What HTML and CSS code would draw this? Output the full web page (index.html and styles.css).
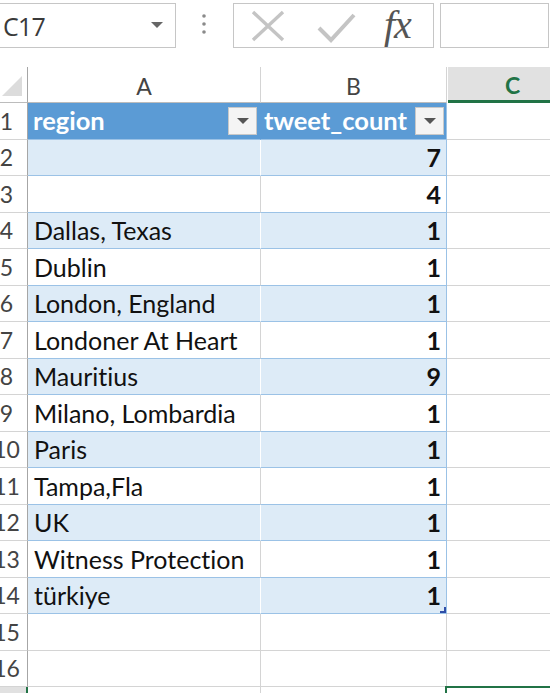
FILE: index.html
```html
<!DOCTYPE html>
<html>
<head>
<meta charset="utf-8">
<link rel="stylesheet" href="styles.css">
</head>
<body>
<div class="fbar">
  <div class="namebox">
    <span class="nb-text">C17</span>
    <svg class="nb-arrow" width="12" height="7" viewBox="0 0 12 7"><path d="M0 0H12L6 6Z" fill="#666"/></svg>
  </div>
  <svg class="dots" width="6" height="24" viewBox="0 0 6 24"><circle cx="3" cy="3" r="1.8" fill="#8a8a8a"/><circle cx="3" cy="11" r="1.8" fill="#8a8a8a"/><circle cx="3" cy="19" r="1.8" fill="#8a8a8a"/></svg>
  <div class="fbtns">
    <svg class="ico x" width="36" height="34" viewBox="0 0 36 34"><path d="M3 3L33 31M33 3L3 31" stroke="#c4c4c4" stroke-width="3.4" fill="none"/></svg>
    <svg class="ico ok" width="40" height="32" viewBox="0 0 40 32"><path d="M3 16L15 28L38 3" stroke="#c4c4c4" stroke-width="4" fill="none"/></svg>
    <span class="fx">fx</span>
  </div>
  <div class="finput"></div>
</div>

<div class="sheet">
  <div class="grid">
    <div class="rh corner"><span class="tri"></span></div>
    <div class="ch">A</div>
    <div class="ch">B</div>
    <div class="ch sel">C</div>

    <div class="rh">1</div>
    <div class="th a">region<span class="filt"><svg width="12" height="7" viewBox="0 0 12 7"><path d="M0 0H12L6 6Z" fill="#555"/></svg></span></div>
    <div class="th b">tweet_count<span class="filt"><svg width="12" height="7" viewBox="0 0 12 7"><path d="M0 0H12L6 6Z" fill="#555"/></svg></span></div>
    <div class="c"></div>

    <div class="rh">2</div><div class="td a band"></div><div class="td b band">7</div><div class="c"></div>
    <div class="rh">3</div><div class="td a"></div><div class="td b">4</div><div class="c"></div>
    <div class="rh">4</div><div class="td a band">Dallas, Texas</div><div class="td b band">1</div><div class="c"></div>
    <div class="rh">5</div><div class="td a">Dublin</div><div class="td b">1</div><div class="c"></div>
    <div class="rh">6</div><div class="td a band">London, England</div><div class="td b band">1</div><div class="c"></div>
    <div class="rh">7</div><div class="td a">Londoner At Heart</div><div class="td b">1</div><div class="c"></div>
    <div class="rh">8</div><div class="td a band">Mauritius</div><div class="td b band">9</div><div class="c"></div>
    <div class="rh">9</div><div class="td a">Milano, Lombardia</div><div class="td b">1</div><div class="c"></div>
    <div class="rh">10</div><div class="td a band">Paris</div><div class="td b band">1</div><div class="c"></div>
    <div class="rh">11</div><div class="td a">Tampa,Fla</div><div class="td b">1</div><div class="c"></div>
    <div class="rh">12</div><div class="td a band">UK</div><div class="td b band">1</div><div class="c"></div>
    <div class="rh">13</div><div class="td a">Witness Protection</div><div class="td b">1</div><div class="c"></div>
    <div class="rh">14</div><div class="td a band">türkiye</div><div class="td b band last">1<span class="handle"></span></div><div class="c"></div>
    <div class="rh">15</div><div class="g"></div><div class="g"></div><div class="c"></div>
    <div class="rh">16</div><div class="g"></div><div class="g"></div><div class="c"></div>
    <div class="rh selrow">17</div><div class="g"></div><div class="g"></div><div class="c active"></div>
  </div>
</div>
</body>
</html>
```

FILE: styles.css
```css
html, body {
  margin: 0;
  padding: 0;
  background: #fff;
}
body {
  width: 550px;
  height: 693px;
  overflow: hidden;
  font-family: Lato, "Open Sans", sans-serif;
  font-variant-ligatures: none;
}

.fbar {
  height: 67px;
  display: flex;
  align-items: flex-start;
  padding-top: 3px;
  box-sizing: border-box;
}
.namebox {
  margin-left: -2px;
  width: 178px;
  height: 45px;
  box-sizing: border-box;
  border: 1px solid #c6c6c6;
  display: flex;
  align-items: center;
  justify-content: space-between;
  padding: 0 12px 0 4px;
}
.nb-text {
  font-family: "Open Sans", sans-serif;
  font-size: 25px;
  color: #3a3a3a;
  letter-spacing: -0.8px;
}
.dots {
  margin: 10px 0 0 25px;
}
.fbtns {
  margin-left: 26px;
  width: 201px;
  height: 45px;
  box-sizing: border-box;
  border: 1px solid #c6c6c6;
  display: flex;
  align-items: center;
  padding-left: 16px;
}
.ico.ok { margin-left: 30px; margin-top: 4px; }
.fx {
  margin-left: 28px;
  font-family: "Liberation Serif", serif;
  font-style: italic;
  font-size: 40px;
  color: #555;
  line-height: 1;
  margin-top: -2px;
  letter-spacing: -1px;
}
.finput {
  margin-left: 6px;
  width: 109px;
  height: 45px;
  box-sizing: border-box;
  border: 1px solid #c6c6c6;
}

.sheet { margin-left: -21px; }
.grid {
  display: grid;
  grid-template-columns: 49px 233px 186px 130px;
  grid-template-rows: 36px;
  grid-auto-rows: 36.5px;
}
.grid > div {
  box-sizing: border-box;
  border-right: 1px solid #d4d4d4;
  border-bottom: 1px solid #d4d4d4;
  display: flex;
  align-items: flex-end;
  overflow: hidden;
  white-space: nowrap;
  position: relative;
}

.rh {
  justify-content: center;
  font-size: 23px;
  color: #444;
  padding-bottom: 4px;
  padding-left: 7px;
}
.grid > .rh { border-right: 1px solid #a6a6a6; }
.corner .tri {
  position: absolute;
  right: 5px;
  bottom: 6px;
  width: 0;
  height: 0;
  border-left: 20px solid transparent;
  border-bottom: 20px solid #dcdcdc;
}
.grid > .corner { border-bottom-color: #bcbcbc; }

.ch {
  justify-content: center;
  align-items: center !important;
  font-size: 23px;
  color: #444;
  padding-top: 3px;
}
.grid > .ch { border-bottom-color: #bcbcbc; }
.grid > .ch.sel {
  background: #e1e1e1;
  color: #217346;
  font-weight: bold;
  border-bottom: 3px solid #217346;
  border-right: none;
  margin-left: 1px;
}

.th {
  background: #5b9bd5;
  color: #fff;
  font-weight: bold;
  font-size: 25.5px;
  padding: 0 0 4px 5px;
}
.grid > .th { border-bottom-color: #9bc2e6; }
.grid > .th.a { border-right-color: #5b9bd5; }
.grid > .th.b { border-right-color: #9bc2e6; padding-left: 3px; }
.filt {
  position: absolute;
  right: 2px;
  top: 4px;
  width: 29px;
  height: 28px;
  box-sizing: border-box;
  background: #f4f4f4;
  border: 1px solid #c8c8c8;
  display: flex;
  align-items: center;
  justify-content: center;
}
.th.a .filt { right: 3px; }

.td {
  font-size: 25px;
  color: #111;
  padding: 0 0 3px 6px;
}
.grid > .td { border-bottom-color: #9bc2e6; }
.td.band { background: #ddebf7; }
.grid > .td.a.band { border-right-color: #fff; }
.td.b {
  justify-content: flex-end;
  padding: 0 5px 3px 0;
  font-weight: bold;
}
.grid > .td.b { border-right-color: #9bc2e6; }
.handle {
  position: absolute;
  right: 0;
  bottom: 0;
  width: 6px;
  height: 6px;
  border-right: 2px solid #2f4fa8;
  border-bottom: 2px solid #2f4fa8;
  box-sizing: border-box;
}

.grid > .c { border-right: none; }
.grid > .c.active {
  border-top: 2px solid #217346;
  border-left: 2px solid #217346;
  margin-left: -2px;
  margin-top: -1px;
}
.grid > .rh.selrow {
  background: #e1e1e1;
  border-right: 2px solid #217346;
}
```
